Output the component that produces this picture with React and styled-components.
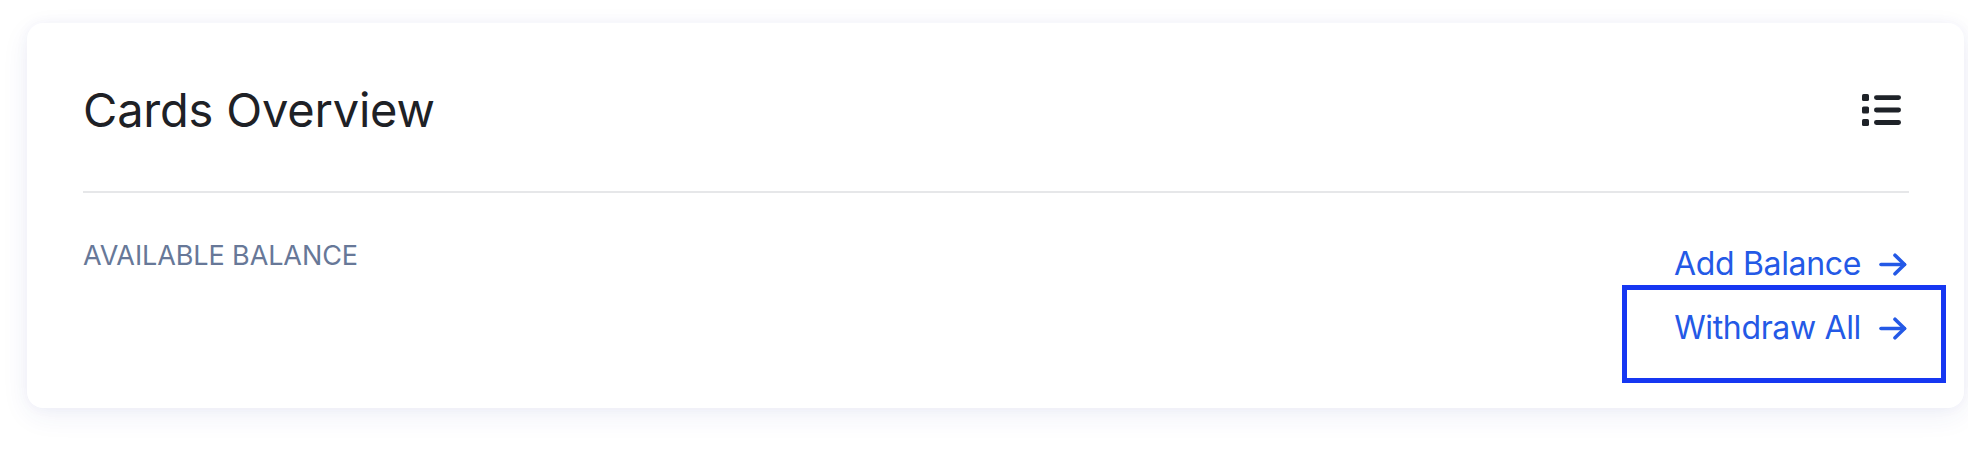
import React from "react";
import styled, { createGlobalStyle } from "styled-components";

const GlobalStyle = createGlobalStyle`
  html, body {
    margin: 0;
    padding: 0;
    background: #ffffff;
    font-family: Inter, "Liberation Sans", Arial, sans-serif;
  }
  * { box-sizing: border-box; }
`;

const Page = styled.div`
  padding: 23px 4px 40px 27px;
`;

const Card = styled.section`
  background: #ffffff;
  border-radius: 16px;
  padding: 0 55px 0 56px;
  box-shadow: 0 8px 28px rgba(40, 60, 150, 0.07), 0 0 14px rgba(40, 60, 150, 0.04);
`;

const Header = styled.header`
  display: flex;
  align-items: center;
  justify-content: space-between;
  padding: 59px 0 53px;
  border-bottom: 2px solid #e6e7e9;
`;

const Title = styled.h1`
  margin: 0;
  font-size: 47px;
  line-height: 56px;
  font-weight: 400;
  color: #1e2126;
  letter-spacing: -0.2px;
`;

const MenuButton = styled.button`
  display: flex;
  align-items: center;
  justify-content: center;
  border: 0;
  background: none;
  padding: 0;
  margin-right: 8px;
  color: #1e2228;
  cursor: pointer;
`;

const Body = styled.div`
  display: flex;
  justify-content: space-between;
  align-items: flex-start;
  padding: 47px 0 61px;
`;

const Label = styled.div`
  font-size: 27px;
  line-height: 32px;
  font-weight: 400;
  color: #677898;
  letter-spacing: -0.1px;
`;

const Actions = styled.div`
  display: flex;
  flex-direction: column;
  align-items: flex-end;
  gap: 26px;
  margin-top: 5px;
`;

const ActionLink = styled.a`
  position: relative;
  display: flex;
  align-items: center;
  gap: 18px;
  font-size: 32px;
  line-height: 38px;
  font-weight: 400;
  color: #2459e6;
  text-decoration: none;
  letter-spacing: -0.35px;
  cursor: pointer;
  padding-right: 2px;

  ${({ $highlighted }) =>
    $highlighted &&
    `
    &::after {
      content: "";
      position: absolute;
      left: -52px;
      top: -24px;
      right: -37px;
      bottom: -36px;
      border: 5px solid #1637f2;
      pointer-events: none;
    }
  `}
`;

const ListIcon = () => (
  <svg width="39" height="32" viewBox="0 0 39 32" fill="currentColor">
    <rect x="0" y="0" width="7" height="7" rx="1.6" />
    <rect x="0" y="12.5" width="7" height="7" rx="1.6" />
    <rect x="0" y="25" width="7" height="7" rx="1.6" />
    <rect x="12" y="1.2" width="27" height="4.8" rx="2.4" />
    <rect x="12" y="13.6" width="27" height="4.8" rx="2.4" />
    <rect x="12" y="26.1" width="27" height="4.8" rx="2.4" />
  </svg>
);

const ArrowIcon = () => (
  <svg width="28" height="23" viewBox="0 0 28 23" fill="none" stroke="currentColor" strokeWidth="3.6" strokeLinecap="round" strokeLinejoin="round">
    <path d="M2 11.5 H25.5" />
    <path d="M16 2.2 L25.5 11.5 L16 20.8" />
  </svg>
);

const actions = [
  { label: "Add Balance" },
  { label: "Withdraw All", highlighted: true },
];

export default function App() {
  return (
    <>
      <GlobalStyle />
      <Page>
        <Card>
          <Header>
            <Title>Cards Overview</Title>
            <MenuButton aria-label="Menu">
              <ListIcon />
            </MenuButton>
          </Header>
          <Body>
            <Label>AVAILABLE BALANCE</Label>
            <Actions>
              {actions.map((a) => (
                <ActionLink key={a.label} href="#" $highlighted={a.highlighted}>
                  <span>{a.label}</span>
                  <ArrowIcon />
                </ActionLink>
              ))}
            </Actions>
          </Body>
        </Card>
      </Page>
    </>
  );
}
